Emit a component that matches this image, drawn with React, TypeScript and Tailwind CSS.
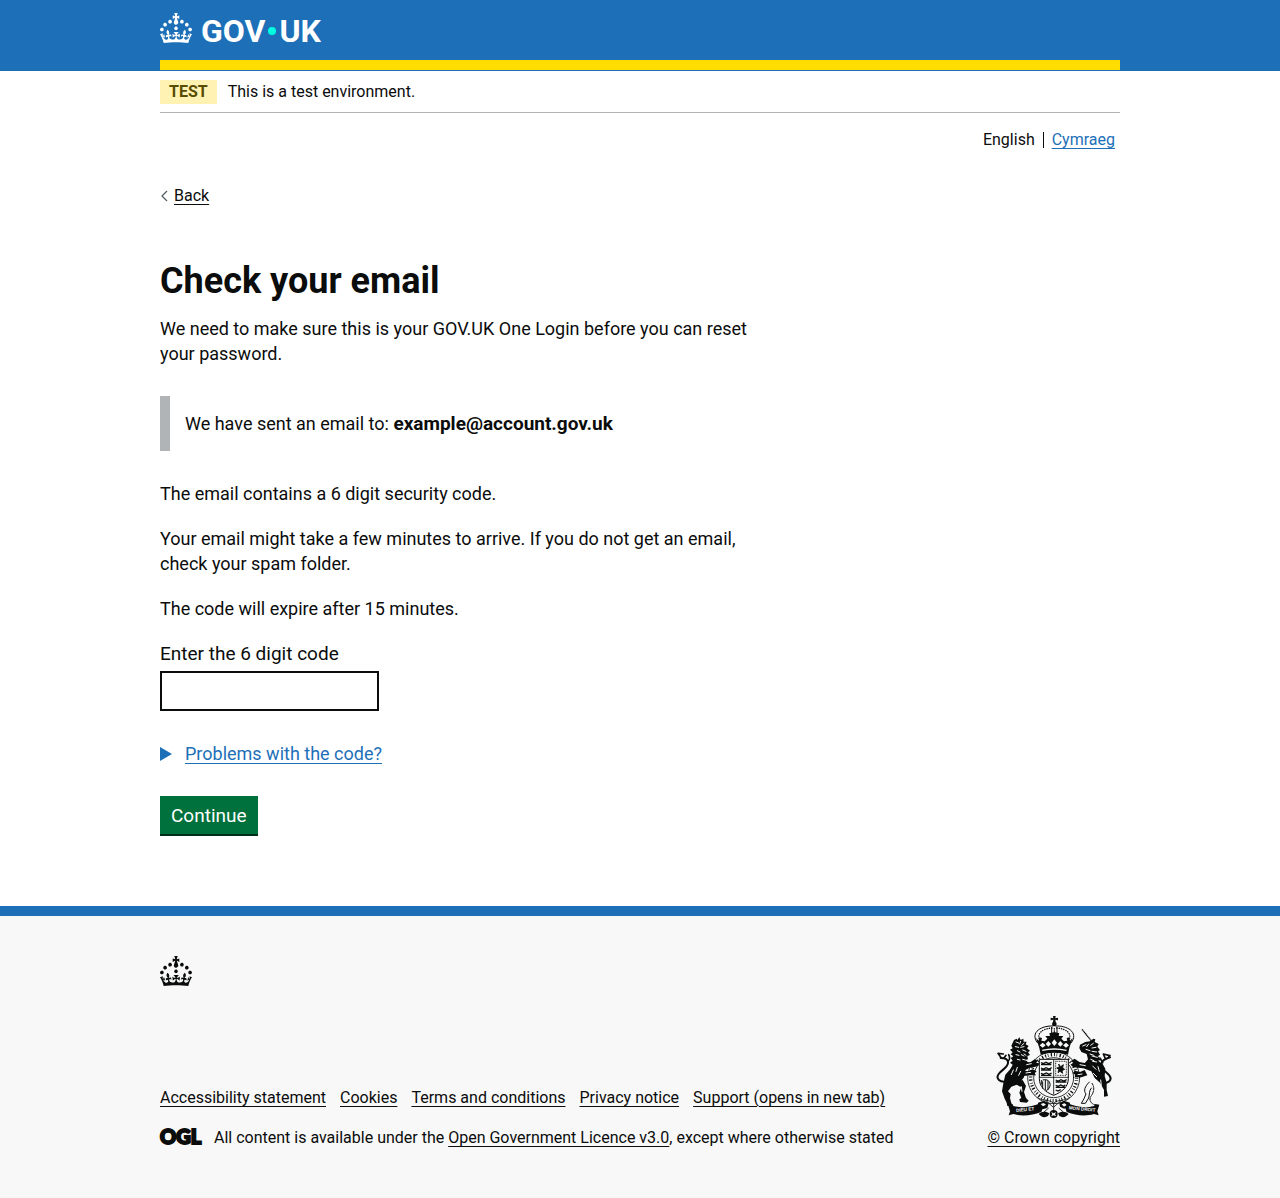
import React from "react";

const CROWN_PATH =
  "M22.6 10.4c-1 .4-2-.1-2.4-1-.4-.9.1-2 1-2.4.9-.4 2 .1 2.4 1s-.1 2-1 2.4m-5.9 6.7c-.9.4-2-.1-2.4-1-.4-.9.1-2 1-2.4.9-.4 2 .1 2.4 1s-.1 2-1 2.4m10.8-3.7c-1 .4-2-.1-2.4-1-.4-.9.1-2 1-2.4.9-.4 2 .1 2.4 1s0 2-1 2.4m3.3 4.8c-1 .4-2-.1-2.4-1-.4-.9.1-2 1-2.4.9-.4 2 .1 2.4 1s-.1 2-1 2.4M17 4.7l2.3 1.2V2.5l-2.3.7-.2-.2.9-3h-3.4l.9 3-.2.2c-.1.1-2.3-.7-2.3-.7v3.4L15 4.7c.1.1.1.2.2.2l-1.3 4c-.1.2-.1.4-.1.6 0 1.1.8 2 1.9 2.2h.7c1-.2 1.9-1.1 1.9-2.1 0-.2 0-.4-.1-.6l-1.3-4c-.1-.2 0-.2.1-.3m-7.6 5.7c.9.4 2-.1 2.4-1 .4-.9-.1-2-1-2.4-.9-.4-2 .1-2.4 1s0 2 1 2.4m-5 3c.9.4 2-.1 2.4-1 .4-.9-.1-2-1-2.4-.9-.4-2 .1-2.4 1s.1 2 1 2.4m-3.2 4.8c.9.4 2-.1 2.4-1 .4-.9-.1-2-1-2.4-.9-.4-2 .1-2.4 1s0 2 1 2.4m14.8 11c4.4 0 8.6.3 12.3.8 1.1-4.5 2.4-7 3.7-8.8l-2.5-.9c.2 1.3.3 1.9 0 2.7-.4-.4-.8-1.1-1.1-2.3l-1.2 4c.7-.5 1.3-.8 2-.9-1.1 2.5-2.6 3.1-3.5 3-1.1-.2-1.7-1.2-1.5-2.1.3-1.2 1.5-1.5 2.1-.1 1.1-2.3-.8-3-2-2.3 1.9-1.9 2.1-3.5.6-5.6-2.1 1.6-2.1 3.2-1.2 5.5-1.2-1.4-3.2-.6-2.5 1.6.9-1.4 2.1-.5 1.9.8-.2 1.1-1.7 2.1-3.5 1.9-2.7-.2-2.9-2.1-2.9-3.6.7-.1 1.9.5 2.9 1.9l.4-4.3c-1.1 1.1-2.1 1.4-3.2 1.4.4-1.2 2.1-3 2.1-3h-5.4s1.7 1.9 2.1 3c-1.1 0-2.1-.2-3.2-1.4l.4 4.3c1-1.4 2.2-2 2.9-1.9-.1 1.5-.2 3.4-2.9 3.6-1.9.2-3.4-.8-3.5-1.9-.2-1.3 1-2.2 1.9-.8.7-2.3-1.2-3-2.5-1.6.9-2.2.9-3.9-1.2-5.5-1.5 2-1.3 3.7.6 5.6-1.2-.7-3.1 0-2 2.3.6-1.4 1.8-1.1 2.1.1.2.9-.3 1.9-1.5 2.1-.9.2-2.4-.5-3.5-3 .6 0 1.2.3 2 .9l-1.2-4c-.3 1.1-.7 1.9-1.1 2.3-.3-.8-.2-1.4 0-2.7l-2.9.9C1.3 23 2.6 25.5 3.7 30c3.7-.5 7.9-.8 12.3-.8";

function Crown() {
  return (
    <svg viewBox="0 0 32 30" className="h-[30px] w-8 shrink-0 fill-current" aria-hidden="true">
      <path d={CROWN_PATH} />
    </svg>
  );
}

function RoyalArms() {
  return (
    <svg viewBox="48 24 348 306" className="h-[102px] w-[116px]" aria-hidden="true">
      <g fill="none" stroke="#0b0c0c" strokeLinecap="round" strokeLinejoin="round">
        {/* Crown arches */}
        <path d="M172 104C148 72 186 52 219 54M274 104c24-32-14-52-47-50" strokeWidth="3" />
        <path d="M180 98c-12-22 8-36 36-38M266 98c12-22-8-36-36-38" strokeWidth="4" strokeDasharray="1 6" />
        <path d="M215 58v34M231 58v34" strokeWidth="3" />
        <path d="M223 62v30" strokeWidth="4" strokeDasharray="1 6" />
        {/* Garter */}
        <circle cx="221" cy="209" r="78" strokeWidth="2.5" fill="#f8f8f8" />
        <circle cx="221" cy="209" r="60" strokeWidth="2.5" />
        <circle cx="221" cy="209" r="69" strokeWidth="10" strokeDasharray="3 5 2 7 4 6" strokeLinecap="butt" />
        {/* Lion tail */}
        <path d="M80 220c-20 4-34-8-24-22 10-14 30-20 28-36-1-10-10-12-22-12" strokeWidth="6" />
        <path d="M84 160c6-4 6-14 2-20M64 150l-10-14 16 2M72 150l6-8" strokeWidth="5" />
        {/* Unicorn tail */}
        <path d="M364 224c22 4 34-8 24-22-12-14-26-18-24-34 2-12 12-16 26-20" strokeWidth="6" />
        <path d="M368 164l-8-14M376 152l-6-14 16 4M384 150l6-8" strokeWidth="5" />
        {/* Horn */}
        <path d="M306 64l34 42" strokeWidth="4" strokeDasharray="4 1" strokeLinecap="butt" />
        {/* Unicorn hind leg and chain */}
        <path d="M328 222c-14 14-18 26-10 36l-6 14-8 14h12l10-16c4-14 0-20 8-30" strokeWidth="3" fill="#f8f8f8" />
        <path d="M336 226c10 14 4 30-4 40-6 10 2 22 12 24" strokeWidth="3" strokeDasharray="5 3" />
      </g>
      <g fill="#0b0c0c">
        {/* Cross and orb */}
        <path d="M219 24h8l-1 7 8-2v8l-8-2 1 7h-8l1-7-8 2v-8l8 2z" />
        <circle cx="223" cy="48" r="7" />
        {/* Crown rim */}
        <path d="M168 90l8 8 2-10 8 2-2 8 10 2 8-8-6-8h14l-2-8 15-4 15 4-2 8h14l-6 8 8 8 10-2-2-8 8-2 2 10 8-8-10 30-4 20c-28-8-56-8-82 0l-4-20z" />
        {/* Lion */}
        <path d="M102 96l8-4 2 4 6-8 4 8 8-4 1 9 9 0-3 8 9 5-5 7 9 7-6 5 6 8-8 3 2 10-8 2 12 10-2 12-10 6-14-2-14 6-12 10-6-12 8-16-8-6 8-6-6-8 8-5-8-6 6-6-8-8 8-4-4-8z" />
        <path d="M96 178l22-12 24-2 12 4-6 12-12 6-4 22-16 20-22 8-10 14 8 8-2 12 4 16 6 6-18 2-2-10-6-12-8-22 4-24 6-26z" />
        <path d="M128 166l24-4 12-8 10 4-6 6 10 2-4 8-14 4-20 2zM124 186l20 4 14-6 12 6-6 6 4 6-18 0-20 2zM106 222l22-6 10 18-6 18 6 18 8 8-6 6-20-2-2-8 6-4-6-16 6-16-14-8z" />
        {/* Unicorn */}
        <path d="M300 110l16-8 14-2 10-8 6 2-2 8 12 6-4 8 8 10-6 4 6 10-6 4 8 12-8 2 14 10 8 14-2 22 6 20 0 22 4 18-12 2 0-20-12-22-16-14-10-20-20-8-4-12 14-16-4-16-16-6-6-12z" />
        <path d="M318 166l-20-4-14-10-10 6 6 8-8 4 8 8 22 2 18 2zM314 186l-14 6-16-4-6 8 8 4-2 8 20 0 18-6z" />
        {/* Compartment and roses */}
        <path d="M174 284l18-6 14 8-4 14-14 4-14-6zM238 286l14-8 18 6-2 14-16 4-12-6z" />
        <path d="M176 318c10-10 24-8 32-2l-4 8c-10 6-20 4-28-6zM266 318c-10-10-24-8-32-2l4 8c10 6 20 4 28-6z" />
        <circle cx="221" cy="318" r="12" />
        {/* Motto scroll */}
        <path d="M84 290l12-2 4 6c30 8 56 2 82-8l8 8-6 18c-28 10-56 14-84 6l-14 4 4-12z" />
        <path d="M358 290l-12-2-4 6c-30 8-54 2-80-8l-8 8 6 18c28 10 54 14 82 6l14 4-4-12z" />
      </g>
      <g fill="#f8f8f8">
        {/* Openings in the crown rim */}
        <path d="M188 104l9 8-9 7-9-7zM205 99l8 9-8 8-8-8zM223 94l8 10-8 10-8-10zM241 99l8 9-8 8-8-8zM258 104l9 8-9 7-9-7z" />
        <path d="M186 125q37-9 74 0l-1 4q-36-8-72 0z" />
        <path d="M214 312l7 4 7-4-3 7 4 6-8-3-8 3 4-6zM182 288l9-3 7 5-9 5zM245 289l9-3 6 5-8 5z" />
      </g>
      {/* Mane and body highlights */}
      <g fill="none" stroke="#f8f8f8" strokeWidth="3" strokeLinecap="round">
        <path d="M108 102l8 3M122 100l-3 8M132 106l-7 6M106 116l10 2M122 118l10-2M112 128l8 4M128 126l10 4M108 140l9 2M124 140l8 4M138 142l-6-4M112 154l8 2M128 154l8 2" />
        <path d="M100 186l-6 14M112 178l-4 12M122 190l-6 12M140 170l14-3M138 195l14-2M92 250l4 14M124 236l2 14" />
        <path d="M308 114l10-4M326 108l-6 8M340 106l-8 6M348 118l-12 2M318 124l12 4M350 132l-14-2M330 138l12 4M352 148l-16-4M332 154l10 4M350 162l-12-2" />
        <path d="M338 174l10 10M354 176l4 14M340 196l10 10M316 173l-16-3M306 198l-12 2M362 216l2 16" />
      </g>
      {/* Shield */}
      <path d="M178 154h87v58c0 24-18 40-44 50-26-10-43-26-43-50z" fill="#f8f8f8" stroke="#0b0c0c" strokeWidth="3" />
      <g fill="none" stroke="#0b0c0c" strokeWidth="2.5">
        <path d="M221 154v106M178 208h87" />
        <path d="M183 164l7 3 8-4 8 4 9-4M183 170h31M183 180l8 3 7-4 9 4 8-4M183 186h30M183 196l7 3 9-4 8 4 8-4M183 202h31" strokeWidth="4" />
        <path d="M227 160h32v42h-32z" strokeDasharray="3 2" />
        <path d="M236 168l6 8 8-6-2 10 6 4-8 4 2 8-8-6-6 4 2-10-6-4 8-2z" fill="#0b0c0c" />
        <path d="M188 216c14-4 24 4 22 18-2 10-12 14-12 14M196 216v30M204 218v28M188 220v22M184 216v14" strokeWidth="3" />
        <path d="M227 216l8 3 8-4 8 4 9-4M227 222h32M227 232l8 3 7-4 9 4 5-4M227 238h28M227 246l7 3 8-4" strokeWidth="4" />
        <path d="M172 268c20 14 34 4 49 18 15-14 29-4 49-18M196 276l24 22 26-22M221 284v26M206 300l-14 12M236 300l14 12" />
      </g>
      <g fill="#f8f8f8" fontFamily="Liberation Sans" fontWeight="700" fontSize="14">
        <text x="108" y="309" transform="rotate(-5 140 306)">DIEU ET</text>
        <text x="266" y="307" transform="rotate(5 300 306)">MON DROIT</text>
      </g>
    </svg>
  );
}

const FOOTER_LINKS = [
  "Accessibility statement",
  "Cookies",
  "Terms and conditions",
  "Privacy notice",
  "Support (opens in new tab)",
];

const linkClass = "underline decoration-1 underline-offset-[3px]";
const containerClass = "mx-auto w-full max-w-[960px]";

export default function App() {
  return (
    <div className="bg-[#f8f8f8] font-['Roboto',sans-serif] text-base leading-5 text-[#0b0c0c]">
      <header className="bg-[#1d70b8] pb-px">
        <div className={`${containerClass} border-b-[10px] border-[#ffdd00] pt-[13px] pb-[17px]`}>
          <a href="#" aria-label="GOV.UK" className="flex h-[30px] w-fit gap-[9px] text-white">
            <Crown />
            <span className="flex items-center pt-1.5 text-[32px] leading-8 font-bold">
              GOV
              <span className="mx-[3px] size-2 rounded-full bg-[#00ffe0]" />
              UK
            </span>
          </a>
        </div>
      </header>

      <div className="bg-white">
        <div className={`${containerClass} pb-[70px]`}>
          <div className="flex items-center gap-[11px] border-b border-[#b1b4b6] pt-[9px] pb-2">
            <strong className="bg-[#fff2b3] px-[9px] py-0.5 font-bold text-[#594d00]">TEST</strong>
            <span>This is a test environment.</span>
          </div>

          <nav aria-label="Language" className="mt-[17px] flex justify-end pr-[5px]">
            <ul className="flex items-center">
              <li className="pr-2">English</li>
              <li className="flex h-4 items-center border-l border-[#0b0c0c] pl-2">
                <a href="#" className={`${linkClass} text-[#1d70b8]`}>Cymraeg</a>
              </li>
            </ul>
          </nav>

          <a href="#" className="mt-9 flex w-fit items-center gap-1.5">
            <svg viewBox="0 0 8 12" className="h-3 w-2" fill="none" stroke="#505a5f" strokeWidth="1.2" aria-hidden="true">
              <path d="M7 1L2 6l5 5" />
            </svg>
            <span className={linkClass}>Back</span>
          </a>

          <main className="max-w-[630px] pt-[55px] text-lg leading-[25px]">
            <h1 className="mb-[15px] text-[36px] leading-10 font-bold">Check your email</h1>
            <p className="max-w-[610px]">
              We need to make sure this is your GOV.UK One Login before you can reset your password.
            </p>
            <div className="my-[30px] border-l-[10px] border-[#b1b4b6] p-[15px]">
              We have sent an email to: <strong className="text-[19px] leading-none font-bold">example@account.gov.uk</strong>
            </div>
            <p className="mb-5">The email contains a 6 digit security code.</p>
            <p className="mb-5 max-w-[610px]">
              Your email might take a few minutes to arrive. If you do not get an email, check your spam folder.
            </p>
            <p className="mb-5">The code will expire after 15 minutes.</p>
            <form onSubmit={(e) => e.preventDefault()}>
              <label htmlFor="code" className="mb-[5px] block text-[19px] leading-[25px]">Enter the 6 digit code</label>
              <input
                id="code"
                type="text"
                inputMode="numeric"
                className="block h-10 w-[219px] border-2 border-[#0b0c0c] bg-white p-[5px]"
              />
              <details className="group mt-[30px]">
                <summary className="flex w-fit cursor-pointer list-none items-center gap-[13px] text-[#1d70b8]">
                  <svg viewBox="0 0 12 14" className="h-3.5 w-3 fill-current group-open:rotate-90" aria-hidden="true">
                    <path d="M0 0l12 7-12 7z" />
                  </svg>
                  <span className={linkClass}>Problems with the code?</span>
                </summary>
              </details>
              <button
                type="submit"
                className="mt-[30px] block h-10 border-b-2 border-[#002d18] bg-[#00703c] px-[11px] text-[19px] leading-[25px] text-white"
              >
                Continue
              </button>
            </form>
          </main>
        </div>
      </div>

      <footer className="border-t-[10px] border-[#1d70b8] bg-[#f8f8f8] pt-10 pb-[50px]">
        <div className={containerClass}>
          <Crown />
          <div className="mt-[30px] flex items-end justify-between gap-8">
            <div>
              <ul className="mb-5 flex flex-wrap gap-x-3.5">
                {FOOTER_LINKS.map((label) => (
                  <li key={label}>
                    <a href="#" className={linkClass}>{label}</a>
                  </li>
                ))}
              </ul>
              <div className="flex items-center gap-[13px]">
                <svg viewBox="0 0 41 18" className="h-[18px] w-[41px] overflow-visible fill-current stroke-current" aria-hidden="true">
                  <text x="0" y="15" fontFamily="Lato" fontWeight="900" fontSize="20" strokeWidth="2">OGL</text>
                </svg>
                <span>
                  All content is available under the{" "}
                  <a href="#" className={linkClass}>Open Government Licence v3.0</a>, except where otherwise stated
                </span>
              </div>
            </div>
            <a href="#" className="flex flex-col items-center gap-[10px]">
              <RoyalArms />
              <span className={linkClass}>© Crown copyright</span>
            </a>
          </div>
        </div>
      </footer>
    </div>
  );
}
